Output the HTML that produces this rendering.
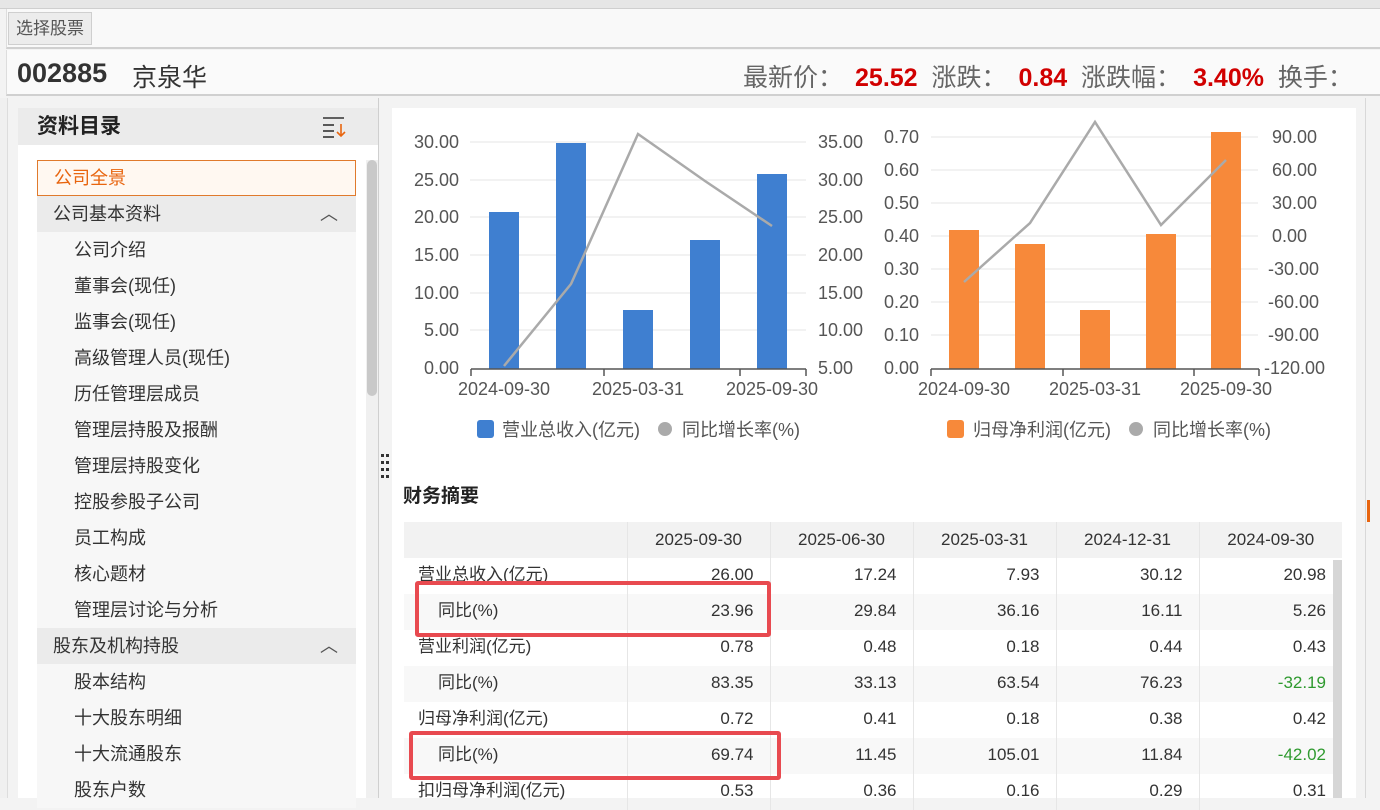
<!DOCTYPE html>
<html><head><meta charset="utf-8">
<style>
*{margin:0;padding:0;box-sizing:border-box}
body{width:1380px;height:798px;overflow:hidden;background:#f3f3f3;font-family:"Liberation Sans","Noto Sans CJK SC",sans-serif;position:relative;color:#333}
.abs{position:absolute}
.top{left:0;top:0;width:1380px;height:9px;background:#e6e6e6;border-bottom:1px solid #cfcfcf}
.bar2{left:6px;top:9px;width:1374px;height:40px;background:#f9f9f9;border-bottom:2px solid #d0d0d0;border-left:1px solid #ddd}
.btn{left:8px;top:12px;width:84px;height:33px;background:#ececec;border:1px solid #cfcfcf;font-size:17px;color:#555;line-height:31px;text-align:center}
.hdr{left:6px;top:50px;width:1374px;height:46px;background:#fafafa;border-bottom:2px solid #d0d0d0;border-left:1px solid #ddd}
.side{left:18px;top:108px;width:360px;height:690px;background:#fff}
.stitle{left:18px;top:108px;width:360px;height:37px;background:#ebebeb;font-size:21px;font-weight:bold;padding-left:19px;line-height:37px;color:#222}
.it{position:absolute;left:37px;width:319px;height:36px;font-size:18px;line-height:36px}
.sub{background:#f7f7f7;padding-left:37px;color:#333}
.grp{background:#ebebeb;padding-left:16px;color:#333}
.main{left:392px;top:108px;width:964px;height:690px;background:#fff}
table{position:absolute;left:404px;top:522px;border-collapse:collapse;font-size:17px;color:#333}
td{height:36px;border-left:1px solid #e6e6e6;text-align:right;padding-right:16px;line-height:30px;vertical-align:top;padding-top:2px}
td:first-child{text-align:left;padding-left:14px;border-left:none}
tr.h td{background:#f2f2f2;text-align:center;padding:0;vertical-align:middle}
tr.s td{background:#f8f8f8}
.g{color:#2f9a2f}
.rb{position:absolute;border:4px solid #e84a50;border-radius:3px}
</style></head><body>
<div class="abs top"></div>
<div class="abs bar2"></div>
<div class="abs btn">选择股票</div>
<div class="abs hdr"></div>
<div class="abs" style="left:17px;top:58px;font-size:27px;font-weight:bold;color:#333">002885</div>
<div class="abs" style="left:132px;top:58px;font-size:25px;color:#333">京泉华</div>
<div class="abs" style="left:743px;top:58px;font-size:25px;color:#666;white-space:nowrap">最新价：<b style="color:#d10000;margin-left:12px">25.52</b>&nbsp; 涨跌：<b style="color:#d10000;margin-left:12px">0.84</b>&nbsp; 涨跌幅：<b style="color:#d10000;margin-left:12px">3.40%</b>&nbsp; 换手：</div>
<div class="abs" style="left:0;top:262px;width:6px;height:84px;background:#e8650f"></div>
<div class="abs" style="left:0;top:98px;width:8px;height:700px;background:#f0f0f0;border-right:1px solid #ddd"></div>

<div class="abs side"></div>
<div class="abs stitle">资料目录</div>
<svg class="abs" style="left:322px;top:116px" width="26" height="22"><g stroke="#333" stroke-width="1.6"><line x1="1" y1="2" x2="22" y2="2"/><line x1="1" y1="9" x2="12" y2="9"/><line x1="1" y1="15" x2="12" y2="15"/><line x1="1" y1="21" x2="12" y2="21"/></g><g stroke="#e8650f" stroke-width="1.6" fill="none"><line x1="19" y1="8" x2="19" y2="20"/><polyline points="15,16 19,20 23,16"/></g></svg>
<div class="it" style="top:160px;background:#fff8f1;border:1px solid #e07a2c;color:#e8650f;padding-left:16px;line-height:34px">公司全景</div>
<div class="it grp" style="top:196px">公司基本资料<span style="position:absolute;right:18px;color:#555">︿</span></div>
<div class="it sub" style="top:232px">公司介绍</div>
<div class="it sub" style="top:268px">董事会(现任)</div>
<div class="it sub" style="top:304px">监事会(现任)</div>
<div class="it sub" style="top:340px">高级管理人员(现任)</div>
<div class="it sub" style="top:376px">历任管理层成员</div>
<div class="it sub" style="top:412px">管理层持股及报酬</div>
<div class="it sub" style="top:448px">管理层持股变化</div>
<div class="it sub" style="top:484px">控股参股子公司</div>
<div class="it sub" style="top:520px">员工构成</div>
<div class="it sub" style="top:556px">核心题材</div>
<div class="it sub" style="top:592px">管理层讨论与分析</div>
<div class="it grp" style="top:628px">股东及机构持股<span style="position:absolute;right:18px;color:#555">︿</span></div>
<div class="it sub" style="top:664px">股本结构</div>
<div class="it sub" style="top:700px">十大股东明细</div>
<div class="it sub" style="top:736px">十大流通股东</div>
<div class="it sub" style="top:772px">股东户数</div>
<div class="abs" style="left:366px;top:160px;width:12px;height:638px;background:#f0f0f0"></div>
<div class="abs" style="left:367px;top:160px;width:10px;height:236px;background:#c9c9c9;border-radius:5px"></div>
<div class="abs" style="left:378px;top:98px;width:1px;height:700px;background:#cfcfcf"></div>
<svg class="abs" style="left:380px;top:453px" width="10" height="28"><g fill="#333"><rect x="1" y="1" width="3" height="3"/><rect x="6" y="1" width="3" height="3"/><rect x="1" y="8" width="3" height="3"/><rect x="6" y="8" width="3" height="3"/><rect x="1" y="15" width="3" height="3"/><rect x="6" y="15" width="3" height="3"/><rect x="1" y="22" width="3" height="3"/><rect x="6" y="22" width="3" height="3"/></g></svg>

<div class="abs main"></div>
<div class="abs" style="left:1365px;top:98px;width:1px;height:700px;background:#d8d8d8"></div>
<div class="abs" style="left:1367px;top:500px;width:3px;height:22px;background:#e8650f"></div>

<svg class="abs" style="left:0;top:0" width="1380" height="460" font-family="Liberation Sans, sans-serif" font-size="18" fill="#555">
<g stroke="#e6e6e6" stroke-width="1">
<line x1="470" y1="142" x2="806" y2="142"/><line x1="470" y1="180" x2="806" y2="180"/><line x1="470" y1="217" x2="806" y2="217"/><line x1="470" y1="255" x2="806" y2="255"/><line x1="470" y1="293" x2="806" y2="293"/><line x1="470" y1="330" x2="806" y2="330"/>
<line x1="931" y1="137" x2="1258" y2="137"/><line x1="931" y1="170" x2="1258" y2="170"/><line x1="931" y1="203" x2="1258" y2="203"/><line x1="931" y1="236" x2="1258" y2="236"/><line x1="931" y1="269" x2="1258" y2="269"/><line x1="931" y1="302" x2="1258" y2="302"/><line x1="931" y1="335" x2="1258" y2="335"/>
</g>
<g text-anchor="end">
<text x="459" y="148">30.00</text><text x="459" y="186">25.00</text><text x="459" y="223">20.00</text><text x="459" y="261">15.00</text><text x="459" y="299">10.00</text><text x="459" y="336">5.00</text><text x="459" y="374">0.00</text>
<text x="919" y="143">0.70</text><text x="919" y="176">0.60</text><text x="919" y="209">0.50</text><text x="919" y="242">0.40</text><text x="919" y="275">0.30</text><text x="919" y="308">0.20</text><text x="919" y="341">0.10</text><text x="919" y="374">0.00</text>
</g>
<g>
<text x="818" y="148">35.00</text><text x="818" y="186">30.00</text><text x="818" y="223">25.00</text><text x="818" y="261">20.00</text><text x="818" y="299">15.00</text><text x="818" y="336">10.00</text><text x="818" y="374">5.00</text>
<text x="1272" y="143">90.00</text><text x="1272" y="176">60.00</text><text x="1272" y="209">30.00</text><text x="1272" y="242">0.00</text><text x="1268" y="275">-30.00</text><text x="1268" y="308">-60.00</text><text x="1268" y="341">-90.00</text><text x="1264" y="374">-120.00</text>
</g>
<g fill="#3f7fd0">
<rect x="489" y="212" width="30" height="157"/><rect x="556" y="143" width="30" height="226"/><rect x="623" y="310" width="30" height="59"/><rect x="690" y="240" width="30" height="129"/><rect x="757" y="174" width="30" height="195"/>
</g>
<g fill="#f7893a">
<rect x="949" y="230" width="30" height="139"/><rect x="1015" y="244" width="30" height="125"/><rect x="1080" y="310" width="30" height="59"/><rect x="1146" y="234" width="30" height="135"/><rect x="1211" y="132" width="30" height="237"/>
</g>
<polyline points="504,366 571,284 638,134 705,181 772,226" fill="none" stroke="#aaa" stroke-width="2.5"/>
<polyline points="964,282 1030,223 1095,122 1161,225 1226,160" fill="none" stroke="#aaa" stroke-width="2.5"/>
<g stroke="#555" stroke-width="1.5">
<line x1="471" y1="369" x2="806" y2="369"/><line x1="471" y1="369" x2="471" y2="376"/><line x1="604" y1="369" x2="604" y2="376"/><line x1="740" y1="369" x2="740" y2="376"/><line x1="806" y1="369" x2="806" y2="376"/>
<line x1="931" y1="369" x2="1259" y2="369"/><line x1="931" y1="369" x2="931" y2="376"/><line x1="1063" y1="369" x2="1063" y2="376"/><line x1="1194" y1="369" x2="1194" y2="376"/><line x1="1259" y1="369" x2="1259" y2="376"/>
</g>
<g text-anchor="middle">
<text x="504" y="395">2024-09-30</text><text x="638" y="395">2025-03-31</text><text x="772" y="395">2025-09-30</text>
<text x="964" y="395">2024-09-30</text><text x="1095" y="395">2025-03-31</text><text x="1226" y="395">2025-09-30</text>
</g>
<rect x="477" y="420" width="17" height="18" rx="3" fill="#3f7fd0"/>
<text x="502" y="436">营业总收入(亿元)</text>
<circle cx="665" cy="429" r="7" fill="#aaa"/>
<text x="682" y="436">同比增长率(%)</text>
<rect x="947" y="420" width="17" height="18" rx="3" fill="#f7893a"/>
<text x="973" y="436">归母净利润(亿元)</text>
<circle cx="1136" cy="429" r="7" fill="#aaa"/>
<text x="1153" y="436">同比增长率(%)</text>
</svg>

<div class="abs" style="left:403px;top:481px;font-size:19px;font-weight:bold;color:#222">财务摘要</div>
<table>
<colgroup><col style="width:223px"><col style="width:143px"><col style="width:143px"><col style="width:143px"><col style="width:143px"><col style="width:143px"></colgroup>
<tr class="h"><td></td><td>2025-09-30</td><td>2025-06-30</td><td>2025-03-31</td><td>2024-12-31</td><td>2024-09-30</td></tr>
<tr><td>营业总收入(亿元)</td><td>26.00</td><td>17.24</td><td>7.93</td><td>30.12</td><td>20.98</td></tr>
<tr class="s"><td style="padding-left:34px">同比(%)</td><td>23.96</td><td>29.84</td><td>36.16</td><td>16.11</td><td>5.26</td></tr>
<tr><td>营业利润(亿元)</td><td>0.78</td><td>0.48</td><td>0.18</td><td>0.44</td><td>0.43</td></tr>
<tr class="s"><td style="padding-left:34px">同比(%)</td><td>83.35</td><td>33.13</td><td>63.54</td><td>76.23</td><td class="g">-32.19</td></tr>
<tr><td>归母净利润(亿元)</td><td>0.72</td><td>0.41</td><td>0.18</td><td>0.38</td><td>0.42</td></tr>
<tr class="s"><td style="padding-left:34px">同比(%)</td><td>69.74</td><td>11.45</td><td>105.01</td><td>11.84</td><td class="g">-42.02</td></tr>
<tr><td>扣归母净利润(亿元)</td><td>0.53</td><td>0.36</td><td>0.16</td><td>0.29</td><td>0.31</td></tr>
</table>
<div class="abs" style="left:1333px;top:560px;width:9px;height:238px;background:#d6d6d6"></div>
<div class="rb" style="left:415px;top:581px;width:356px;height:56px"></div>
<div class="rb" style="left:409px;top:731px;width:372px;height:49px"></div>
</body></html>
